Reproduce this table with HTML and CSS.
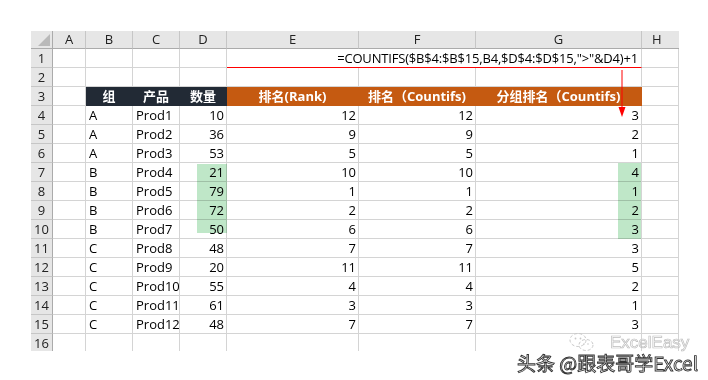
FILE: index.html
```html
<!DOCTYPE html>
<html lang="zh-CN">
<head>
<meta charset="utf-8">
<title>分组排名</title>
<link rel="stylesheet" href="styles.css">
</head>
<body>
<div class="page">
  <div class="sheet">
    <div class="corner"><span class="tri"></span></div>
    <div class="ch">A</div><div class="ch">B</div><div class="ch">C</div><div class="ch">D</div><div class="ch">E</div><div class="ch">F</div><div class="ch">G</div><div class="ch ch-last">H</div>

    <div class="rh">1</div><div class="c"></div><div class="c"></div><div class="c"></div><div class="c"></div>
    <div class="c formula">=COUNTIFS($B$4:$B$15,B4,$D$4:$D$15,"&gt;"&amp;D4)+1</div><div class="c"></div>

    <div class="rh">2</div><div class="c"></div><div class="c"></div><div class="c"></div><div class="c"></div><div class="c"></div><div class="c"></div><div class="c"></div><div class="c"></div>

    <div class="rh">3</div><div class="c"></div>
    <div class="c hd dark">组</div><div class="c hd dark">产品</div><div class="c hd dark">数量</div>
    <div class="c hd org">排名(Rank)</div><div class="c hd org">排名（Countifs)</div><div class="c hd org">分组排名（Countifs)</div><div class="c"></div>

    <div class="rh">4</div><div class="c"></div><div class="c">A</div><div class="c">Prod1</div><div class="c n">10</div><div class="c n">12</div><div class="c n">12</div><div class="c n">3</div><div class="c"></div>
    <div class="rh">5</div><div class="c"></div><div class="c">A</div><div class="c">Prod2</div><div class="c n">36</div><div class="c n">9</div><div class="c n">9</div><div class="c n">2</div><div class="c"></div>
    <div class="rh">6</div><div class="c"></div><div class="c">A</div><div class="c">Prod3</div><div class="c n">53</div><div class="c n">5</div><div class="c n">5</div><div class="c n">1</div><div class="c"></div>
    <div class="rh">7</div><div class="c"></div><div class="c">B</div><div class="c">Prod4</div><div class="c n">21</div><div class="c n">10</div><div class="c n">10</div><div class="c n">4</div><div class="c"></div>
    <div class="rh">8</div><div class="c"></div><div class="c">B</div><div class="c">Prod5</div><div class="c n">79</div><div class="c n">1</div><div class="c n">1</div><div class="c n">1</div><div class="c"></div>
    <div class="rh">9</div><div class="c"></div><div class="c">B</div><div class="c">Prod6</div><div class="c n">72</div><div class="c n">2</div><div class="c n">2</div><div class="c n">2</div><div class="c"></div>
    <div class="rh">10</div><div class="c"></div><div class="c">B</div><div class="c">Prod7</div><div class="c n">50</div><div class="c n">6</div><div class="c n">6</div><div class="c n">3</div><div class="c"></div>
    <div class="rh">11</div><div class="c"></div><div class="c">C</div><div class="c">Prod8</div><div class="c n">48</div><div class="c n">7</div><div class="c n">7</div><div class="c n">3</div><div class="c"></div>
    <div class="rh">12</div><div class="c"></div><div class="c">C</div><div class="c">Prod9</div><div class="c n">20</div><div class="c n">11</div><div class="c n">11</div><div class="c n">5</div><div class="c"></div>
    <div class="rh">13</div><div class="c"></div><div class="c">C</div><div class="c">Prod10</div><div class="c n">55</div><div class="c n">4</div><div class="c n">4</div><div class="c n">2</div><div class="c"></div>
    <div class="rh">14</div><div class="c"></div><div class="c">C</div><div class="c">Prod11</div><div class="c n">61</div><div class="c n">3</div><div class="c n">3</div><div class="c n">1</div><div class="c"></div>
    <div class="rh">15</div><div class="c"></div><div class="c">C</div><div class="c">Prod12</div><div class="c n">48</div><div class="c n">7</div><div class="c n">7</div><div class="c n">3</div><div class="c"></div>
    <div class="rh last">16</div><div class="c last"></div><div class="c last"></div><div class="c last"></div><div class="c last"></div><div class="c last"></div><div class="c last"></div><div class="c last"></div><div class="c last"></div>

    <div class="mark mark-d"></div>
    <div class="mark mark-g"></div>
    <svg class="arrow" width="10" height="50" viewBox="0 0 10 50">
      <line x1="5" y1="0" x2="5" y2="40" stroke="#ff0000" stroke-width="1"/>
      <polygon points="1.5,37 8.5,37 5,47" fill="#ff0000"/>
    </svg>
  </div>

  <div class="wm-brand">
    <svg class="wm-icon" width="28" height="20" viewBox="0 0 28 20">
      <ellipse cx="10" cy="8" rx="8" ry="6.5" fill="none" stroke="#c8c8c8" stroke-width="1" stroke-dasharray="3 2"/>
      <ellipse cx="18" cy="13" rx="7" ry="5.5" fill="none" stroke="#c8c8c8" stroke-width="1" stroke-dasharray="3 2"/>
      <circle cx="7.5" cy="6.5" r="0.9" fill="#c8c8c8"/>
      <circle cx="12.5" cy="6.5" r="0.9" fill="#c8c8c8"/>
      <circle cx="16" cy="12" r="0.8" fill="#c8c8c8"/>
      <circle cx="20" cy="12" r="0.8" fill="#c8c8c8"/>
    </svg>
    <span class="wm-easy">ExcelEasy</span>
  </div>
  <div class="wm-main">头条 @跟表哥学Excel</div>
</div>
</body>
</html>
```

FILE: styles.css
```css
html, body {
  margin: 0;
  padding: 0;
  background: #ffffff;
}

.page {
  position: relative;
  width: 708px;
  height: 380px;
  overflow: hidden;
  font-family: "Open Sans", "Noto Sans CJK SC", sans-serif;
}

.sheet {
  position: relative;
  margin: 31px 0 0 31px;
  display: grid;
  grid-template-columns: 22px 33px 47px 47px 47px 132px 117px 166px 37px;
  grid-template-rows: 18px repeat(15, 19px) 17px;
  width: 648px;
}

.corner {
  position: relative;
  background: #e6e6e6;
  border-right: 1px solid #ababab;
  border-bottom: 1px solid #ababab;
  box-sizing: border-box;
}
.tri {
  position: absolute;
  right: 2px;
  bottom: 2px;
  width: 0;
  height: 0;
  border-left: 12px solid transparent;
  border-bottom: 12px solid #b9b9b9;
}

.ch {
  background: #e6e6e6;
  border-right: 1px solid #c6c6c6;
  border-bottom: 1px solid #ababab;
  box-sizing: border-box;
  font-size: 13px;
  line-height: 17px;
  color: #222;
  text-align: center;
}
.ch-last {
  border-right: none;
  text-align: left;
  padding-left: 10px;
}

.rh {
  background: #e6e6e6;
  border-right: 1px solid #ababab;
  border-bottom: 1px solid #c6c6c6;
  box-sizing: border-box;
  font-size: 13px;
  line-height: 18px;
  color: #222;
  text-align: center;
}
.rh.last {
  border-bottom: none;
}

.c {
  border-right: 1px solid #d4d4d4;
  border-bottom: 1px solid #d4d4d4;
  box-sizing: border-box;
  font-size: 13px;
  line-height: 18px;
  color: #000;
  padding: 0 3px;
  white-space: nowrap;
}
.c.last {
  border-bottom: none;
}
.c.n {
  text-align: right;
  padding-right: 2px;
}

.c.formula {
  grid-column: span 3;
  text-align: right;
  border-bottom: 1px solid #ff0000;
  padding-right: 3px;
  letter-spacing: -0.18px;
}

.hd {
  color: #ffffff;
  font-weight: bold;
  text-align: center;
  padding: 0;
}
.hd.dark {
  background: #222a35;
  border-color: #222a35;
}
.hd.org {
  background: #c55a11;
  border-color: #c55a11;
}

.mark {
  position: absolute;
  background: #bfe7c8;
  mix-blend-mode: multiply;
}
.mark-d {
  left: 166px;
  top: 133px;
  width: 30px;
  height: 69px;
}
.mark-g {
  left: 587px;
  top: 132px;
  width: 23px;
  height: 76px;
}

.arrow {
  position: absolute;
  left: 586px;
  top: 39px;
}

.wm-brand {
  position: absolute;
  left: 568px;
  top: 333px;
  height: 18px;
  display: flex;
  align-items: center;
  gap: 14px;
}
.wm-easy {
  font-family: "Liberation Sans", Arial, sans-serif;
  font-size: 17px;
  line-height: 15px;
  color: rgba(255, 255, 255, 0.7);
  -webkit-text-stroke: 0.7px #bdbdbd;
}

.wm-main {
  position: absolute;
  left: 517px;
  top: 353px;
  font-family: "Noto Sans CJK SC", sans-serif;
  font-size: 19px;
  line-height: 19px;
  color: rgba(255, 255, 255, 0.8);
  -webkit-text-stroke: 0.9px #333333;
}
```
